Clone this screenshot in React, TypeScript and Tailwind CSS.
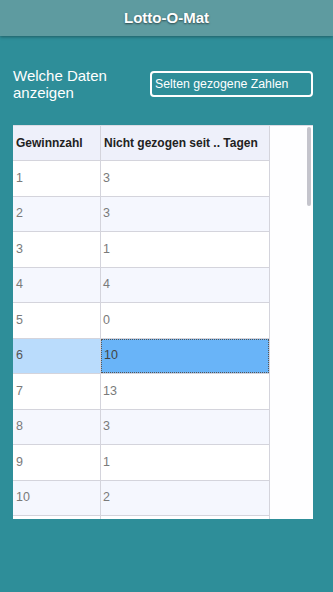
import React from "react";

const rows: [string, string][] = [
  ["1", "3"],
  ["2", "3"],
  ["3", "1"],
  ["4", "4"],
  ["5", "0"],
  ["6", "10"],
  ["7", "13"],
  ["8", "3"],
  ["9", "1"],
  ["10", "2"],
  ["", ""],
];

export default function App() {
  return (
    <div
      className="w-full min-h-[592px] bg-[#2e8e99] flex flex-col"
      style={{ fontFamily: '"Liberation Sans", Arial, Helvetica, sans-serif' }}
    >
      <div className="h-[36px] bg-[#5e9ba0] flex items-center justify-center shadow-[0_1px_3px_rgba(0,0,0,0.35)] relative z-10">
        <span className="text-white font-bold text-[15px] [text-shadow:0_1px_2px_rgba(0,0,0,0.55)]">
          Lotto-O-Mat
        </span>
      </div>

      <div className="flex items-center mt-[31px] pl-[13px] pr-[20px] h-[34px]">
        <div className="text-white text-[15px] leading-[17px] w-[137px]">
          Welche Daten
          <br />
          anzeigen
        </div>
        <div className="flex-1 h-[26px] border-2 border-white rounded-[4px] flex items-center pl-[3px] text-white text-[12.3px]">
          Selten gezogene Zahlen
        </div>
      </div>

      <div className="mt-[24px] ml-[13px] w-[300px] h-[394px] bg-[#fefeff] overflow-hidden relative flex border-t border-[#dcdce4]">
        <div className="w-[257px] flex flex-col border-r border-[#d4d4dc] shrink-0">
          <div className="flex h-[35px] bg-[#eef0fa] border-b border-[#d4d4dc] shrink-0">
            <div className="w-[88px] border-r border-[#d4d4dc] flex items-center pl-[3px] text-[12px] font-bold text-[#222]">
              Gewinnzahl
            </div>
            <div className="flex-1 flex items-center pl-[3px] text-[12px] font-bold text-[#222]">
              Nicht gezogen seit .. Tagen
            </div>
          </div>
          {rows.map(([a, b], i) => {
            const sel = i === 5;
            const even = i % 2 === 1;
            return (
              <div
                key={i}
                className={
                  "flex h-[35.5px] border-b border-[#d4d4dc] shrink-0 " +
                  (even ? "bg-[#f5f7fe]" : "bg-white")
                }
              >
                <div
                  className={
                    "w-[88px] border-r border-[#d4d4dc] flex items-center pl-[3px] text-[12.5px] " +
                    (sel ? "bg-[#badcfc] text-[#555]" : "text-[#7a7a7a]")
                  }
                >
                  {a}
                </div>
                <div
                  className={
                    "flex-1 flex items-center pl-[2px] text-[12.5px] " +
                    (sel
                      ? "bg-[#69b4f8] text-[#444] border border-dotted border-[#555]"
                      : "text-[#7a7a7a]")
                  }
                >
                  {b}
                </div>
              </div>
            );
          })}
        </div>
        <div className="flex-1 relative">
          <div className="absolute right-[2px] top-[1px] w-[4px] h-[79px] rounded-full bg-[#c4c4cc]" />
        </div>
      </div>
      <div className="flex-1" />
    </div>
  );
}
